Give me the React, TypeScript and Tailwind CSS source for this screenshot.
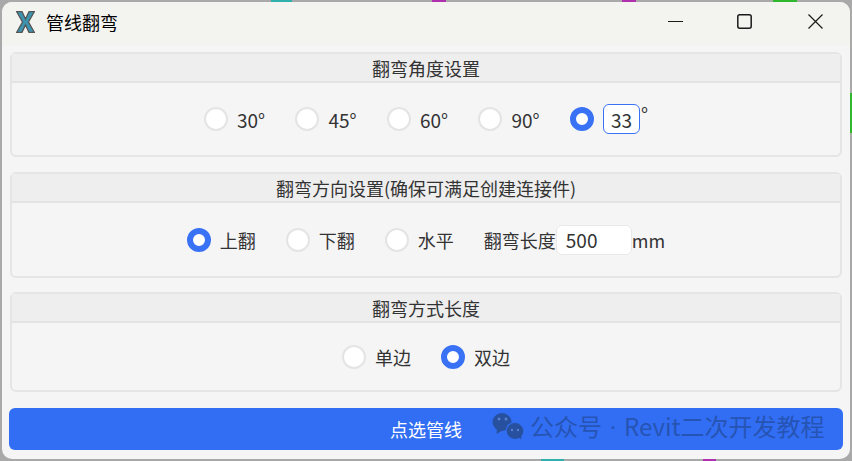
const cjk = '"Noto Sans CJK SC", "Open Sans", sans-serif';

function Radio({ label, checked }: { label?: string; checked?: boolean }) {
  return (
    <div className="flex items-center gap-[9px]">
      {checked ? (
        <span className="h-6 w-6 rounded-full border-[6px] border-[#3a72f6] bg-white" />
      ) : (
        <span className="h-6 w-6 rounded-full border-2 border-[#e4e4e4] bg-white" />
      )}
      {label && <span>{label}</span>}
    </div>
  );
}

function AngleRadio({ label }: { label: string }) {
  return (
    <div className="flex items-center gap-[9px]">
      <span className="h-6 w-6 rounded-full border-2 border-[#e4e4e4] bg-white" />
      <span className="w-[29px] whitespace-nowrap text-[19px]">{label}</span>
    </div>
  );
}

function Panel({ title, height, children }: { title: string; height: string; children: React.ReactNode }) {
  return (
    <section className={`${height} flex flex-col rounded-md border-2 border-[#e5e5e5] bg-[#f5f5f5]`}>
      <h2 className="flex h-[29px] shrink-0 items-center justify-center border-b-2 border-[#e3e3e3] bg-[#eeeeee] text-[18px] font-normal">
        {title}
      </h2>
      <div className="flex flex-1 items-center justify-center">{children}</div>
    </section>
  );
}

function WeChat() {
  return (
    <svg width="32" height="28" viewBox="0 0 32 28">
      <ellipse cx="10" cy="10" rx="9.500" ry="9" fill="#27509f" />
      <path d="M5 16l-.5 6 6.500-4z" fill="#27509f" />
      <ellipse cx="23" cy="19" rx="9" ry="8.500" fill="#27509f" stroke="#326ef3" strokeWidth="1.200" />
      <path d="M26 25l3.500 2.500-.5-5z" fill="#27509f" />
      <circle cx="7" cy="7" r="1.500" fill="#5a7fd0" />
      <circle cx="14" cy="7" r="1.500" fill="#5a7fd0" />
      <circle cx="20" cy="18" r="1.200" fill="#5a7fd0" />
      <circle cx="26" cy="18" r="1.200" fill="#5a7fd0" />
    </svg>
  );
}

export default function App() {
  return (
    <div className="relative h-[461px] w-[852px] overflow-hidden bg-[#a9a9a9] p-[2px]" style={{ fontFamily: cjk }}>
      {/* desktop showing behind the window edge */}
      <span className="absolute left-[271px] top-0 h-[2px] w-[21px] bg-[#2fb0ac]" />
      <span className="absolute left-[432px] top-0 h-[2px] w-[14px] bg-[#b030b0]" />
      <span className="absolute left-[622px] top-0 h-[2px] w-[14px] bg-[#b030b0]" />
      <span className="absolute left-[773px] top-0 h-[2px] w-[24px] bg-[#2eb82e]" />
      <span className="absolute right-0 top-[93px] h-[40px] w-[2px] bg-[#2eb82e]" />
      <span className="absolute bottom-0 left-[541px] h-[2px] w-[23px] bg-[#2fb0ac]" />
      <span className="absolute bottom-0 left-[703px] h-[2px] w-[13px] bg-[#b030b0]" />

      <div className="relative flex h-[457px] flex-col overflow-hidden rounded-[10px] bg-[#f5f5f5] text-[18px] leading-none text-[#333333]">
        <header className="flex h-[43px] shrink-0 items-center bg-[#f3f3ef] pb-[4px] pl-[14px] text-black">
          <svg width="19" height="22" viewBox="0 0 19 22">
            <path d="M.7 .7h5.300L9.500 8l3.500-7.300h5.300L12.500 11l5.800 10.300H13L9.500 14 6 21.300H.7L6.500 11z" fill="#3d94b0" stroke="#555555" strokeWidth="1.300" />
          </svg>
          <span className="ml-[11px] text-[18px]">管线翻弯</span>
          <div className="ml-auto flex items-center">
            <svg width="15" height="15" viewBox="0 0 15 15" className="mr-[54px]">
              <path d="M0 7.500h15" stroke="#1a1a1a" strokeWidth="1.200" />
            </svg>
            <svg width="15" height="15" viewBox="0 0 15 15" className="mr-[56px]">
              <rect x=".8" y=".8" width="13.400" height="13.400" rx="2" fill="none" stroke="#1a1a1a" strokeWidth="1.500" />
            </svg>
            <svg width="15" height="15" viewBox="0 0 15 15" className="mr-[27px]">
              <path d="M.5 .5l14 14M14.500 .5l-14 14" stroke="#1a1a1a" strokeWidth="1.200" />
            </svg>
          </div>
        </header>

        <main className="flex flex-1 flex-col px-2">
          <Panel title="翻弯角度设置" height="h-[105px] mt-[7px]">
            <div className="flex items-center gap-[29.5px]">
              <AngleRadio label="30°" />
              <AngleRadio label="45°" />
              <AngleRadio label="60°" />
              <AngleRadio label="90°" />
              <div className="flex items-center gap-[9px]">
                <Radio checked />
                <div className="flex items-start text-[19px]">
                  <div className="flex h-[30px] w-[37px] items-center justify-center rounded-md border border-[#3a72f6] bg-white">33</div>
                  <span className="ml-px">°</span>
                </div>
              </div>
            </div>
          </Panel>
          <div className="h-[15px]" />
          <Panel title="翻弯方向设置(确保可满足创建连接件)" height="h-[106px]">
            <div className="flex items-center gap-[30px]">
              <Radio label="上翻" checked />
              <Radio label="下翻" />
              <Radio label="水平" />
              <div className="flex items-center">
                <span>翻弯长度</span>
                <div className="flex h-[30px] w-[76px] items-center rounded-md border border-[#e8e8e8] bg-white pl-[9px] text-[19px]">500</div>
                <span>mm</span>
              </div>
            </div>
          </Panel>
          <div className="h-[14px]" />
          <Panel title="翻弯方式长度" height="h-[100px]">
            <div className="flex items-center gap-[30px]">
              <Radio label="单边" />
              <Radio label="双边" checked />
            </div>
          </Panel>
          <button className="relative -mx-px mt-4 flex h-[42px] items-center justify-center rounded-md bg-[#326ef3] text-[18px] text-white">
            点选管线
            <span className="absolute left-[483px] top-[4px] flex h-[28px] items-center whitespace-nowrap text-[24px] text-[#2654b4]">
              <WeChat />
              <span className="ml-[6px]">公众号</span>
              <span className="flex w-[22px] justify-center font-['Liberation_Sans']">·</span>
              <span>Revit二次开发教程</span>
            </span>
          </button>
        </main>
      </div>
    </div>
  );
}
